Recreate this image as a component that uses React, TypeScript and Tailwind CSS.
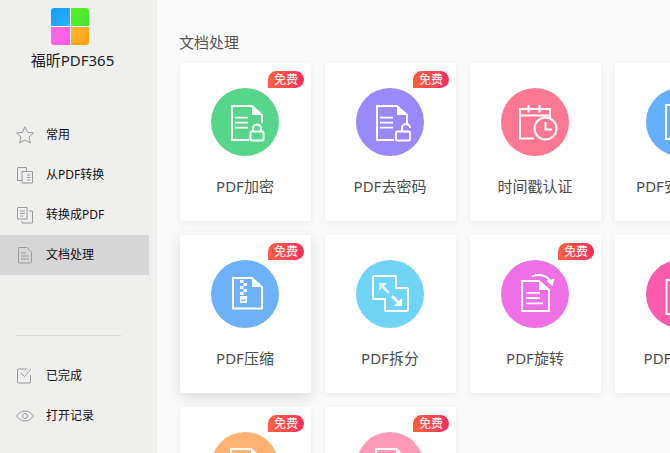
import React from "react";

const FONT = "[font-family:'Noto_Sans','Noto_Sans_CJK_SC',sans-serif]";
const SW = "2";

function Doc({ x = 21, y = 18, w = 30, h = 34, cut = false }: { x?: number; y?: number; w?: number; h?: number; cut?: boolean }) {
  const fx = x + w - 10;
  const fy = y + 9;
  const r = x + w;
  const b = y + h;
  const outline = cut
    ? `M${x + 17} ${b}H${x}V${y}H${fx}L${r} ${fy}V${b - 17}`
    : `M${x} ${y}H${fx}L${r} ${fy}V${b}H${x}Z`;
  return (
    <>
      <path d={outline} fill="none" stroke="#fff" strokeWidth={SW} />
      <path d={`M${fx} ${y}L${r} ${fy}H${fx}Z`} fill="#fff" />
    </>
  );
}

function Icon({ name }: { name: string }) {
  const lines = (x: number, y: number, w: number, step = 5) => (
    <path d={`M${x} ${y}h${w}M${x} ${y + step}h${w}M${x} ${y + step * 2}h${w}`} stroke="#fff" strokeWidth="1.800" fill="none" />
  );
  let body: React.ReactNode = null;
  if (name === "lock") {
    body = (
      <>
        <Doc cut />
        {lines(24, 29.7, 13)}
        <rect x="39.500" y="43.500" width="13" height="9" rx="1.500" fill="none" stroke="#fff" strokeWidth={SW} />
        <path d="M42 43v-2.500a4 4 0 0 1 8 0V43" fill="none" stroke="#fff" strokeWidth={SW} />
      </>
    );
  } else if (name === "unlock") {
    body = (
      <>
        <Doc cut />
        {lines(24, 29.7, 13)}
        <rect x="40" y="43.500" width="14" height="9" rx="1.500" fill="none" stroke="#fff" strokeWidth={SW} />
        <path d="M46 43v-3a4 4 0 0 1 8 0" fill="none" stroke="#fff" strokeWidth={SW} />
      </>
    );
  } else if (name === "clock") {
    body = (
      <>
        <path d="M33 50.500H19V21H49V30" fill="none" stroke="#fff" strokeWidth={SW} />
        <path d="M19 27.500H49M27.500 17V24.500M38.500 17V24.500" fill="none" stroke="#fff" strokeWidth={SW} />
        <circle cx="44.500" cy="40.500" r="11" fill="none" stroke="#fff" strokeWidth={SW} />
        <path d="M44.500 34V41.500H51" fill="none" stroke="#fff" strokeWidth={SW} />
      </>
    );
  } else if (name === "zip") {
    body = (
      <>
        <Doc x={22} y={18} w={29} h={30.500} />
        <path d="M29 20h3.500v3H29zM32.500 23H36v3h-3.500zM29 26h3.500v3H29zM32.500 29H36v3h-3.500zM29 32h3.500v3H29z" fill="#fff" />
        <path d="M29 36h7v7h-7z" fill="#fff" />
        <path d="M30.500 39.500h4v1.500h-4z" fill="#6db2f8" />
      </>
    );
  } else if (name === "split") {
    body = (
      <>
        <path d="M18 16H39a1 1 0 0 1 1 1V28H51a1 1 0 0 1 1 1V50a1 1 0 0 1-1 1H30a1 1 0 0 1-1-1V39H18a1 1 0 0 1-1-1V17a1 1 0 0 1 1-1Z" fill="none" stroke="#fff" strokeWidth={SW} />
        <path d="M25 25L33 33" stroke="#d8f3fd" strokeWidth="2.500" />
        <path d="M23 23h8l-8 8z" fill="#d8f3fd" />
        <path d="M36 36L44 44" stroke="#fff" strokeWidth="2.500" />
        <path d="M46 46h-8l8-8z" fill="#fff" />
      </>
    );
  } else if (name === "rotate") {
    body = (
      <>
        <Doc x={21} y={21} w={27} h={30} />
        <path d="M25 32.800h14M25 38h14M25 43.300h17" stroke="#fff" strokeWidth="1.800" fill="none" />
        <path d="M31 16.500C38 13.500 46 15 49.500 21.500" fill="none" stroke="#fff" strokeWidth={SW} />
        <path d="M45.500 21L53.500 18.500L51.500 26.500Z" fill="#fff" />
      </>
    );
  } else if (name === "wm") {
    body = <Doc x={20.500} y={20} w={30} h={34} />;
  } else {
    body = (
      <>
        <Doc x={20} y={17} w={30} h={34} />
        {lines(24, 30, 18)}
      </>
    );
  }
  return (
    <svg viewBox="0 0 68 68" className="w-[68px] h-[68px]">
      {body}
    </svg>
  );
}

type Tool = { label: string; color: string; icon: string; free?: boolean; hover?: boolean };

const tools: Tool[] = [
  { label: "PDF加密", color: "bg-[#57d68b]", icon: "lock", free: true },
  { label: "PDF去密码", color: "bg-[#9a88fd]", icon: "unlock", free: true },
  { label: "时间戳认证", color: "bg-[#ff7891]", icon: "clock" },
  { label: "PDF安全设置", color: "bg-[#66affe]", icon: "doc" },
  { label: "PDF压缩", color: "bg-[#6db2f8]", icon: "zip", free: true, hover: true },
  { label: "PDF拆分", color: "bg-[#71d3f6]", icon: "split" },
  { label: "PDF旋转", color: "bg-[#ef6fe4]", icon: "rotate", free: true },
  { label: "PDF加水印", color: "bg-[#fb5bac]", icon: "wm" },
  { label: "", color: "bg-[#ffb273]", icon: "doc", free: true },
  { label: "", color: "bg-[#ff9ab9]", icon: "doc", free: true },
];

function Card({ t }: { t: Tool }) {
  return (
    <div
      className={`relative w-[131px] h-[158px] bg-white rounded-[2px] flex flex-col items-center pt-[25px] pr-[2px] ${
        t.hover ? "shadow-[0_4px_14px_rgba(0,0,0,0.13)]" : "shadow-[0_2px_6px_rgba(0,0,0,0.06)]"
      }`}
    >
      {t.free && (
        <span className="absolute top-[8px] right-[7px] w-[36px] h-[17px] rounded-t-[8.500px] rounded-br-[8.500px] rounded-bl-none bg-gradient-to-r from-[#ff6040] to-[#ff2a5f] text-white text-[12px] leading-[17px] text-center">
          免费
        </span>
      )}
      <div className={`w-[68px] h-[68px] rounded-full shrink-0 ${t.color}`}>
        <Icon name={t.icon} />
      </div>
      <div className="mt-[19px] ml-[1px] text-[15px] leading-[22px] text-[#4d4d4d] whitespace-nowrap">{t.label}</div>
    </div>
  );
}

const I = "w-[18px] h-[18px] shrink-0";
const S = { fill: "none", stroke: "#9a9a9a", strokeWidth: 1 } as const;

const StarI = () => (
  <svg viewBox="0 0 18 18" className={I} {...S}>
    <path d="M9 .8l2.500 5.500 6 .7-4.500 4 1.300 5.900L9 14l-5.300 2.900L5 11 .5 7l6-.7z" />
  </svg>
);
const FromI = () => (
  <svg viewBox="0 0 18 18" className={I} {...S}>
    <path d="M6 14.500H1.500V1.500H10.500V5" />
    <path d="M6 5.500H16.500V17H6z" />
    <path d="M11 9h3.500M11 11.500h3.500M11 14h3.500" />
  </svg>
);
const ToI = () => (
  <svg viewBox="0 0 18 18" className={I} {...S}>
    <path d="M1.500 1.500H11V13H1.500z" />
    <path d="M13 5H16.500V17H6V15" />
    <path d="M4 5h5M4 7.500h5M4 10h3.500" />
  </svg>
);
const DocI = () => (
  <svg viewBox="0 0 18 18" className={I} {...S}>
    <path d="M2.500 2.500a1 1 0 0 1 1-1H11l4.500 4.500V16a1 1 0 0 1-1 1H3.500a1 1 0 0 1-1-1z" />
    <path d="M5 7h5M5 10h8M5 13h8" />
  </svg>
);
const CheckI = () => (
  <svg viewBox="0 0 18 18" className={I} {...S}>
    <path d="M11.500 2H2.500a1 1 0 0 0-1 1v12a1 1 0 0 0 1 1h11a1 1 0 0 0 1-1V8" />
    <path d="M5 6l3.500 3.500L15 2" />
  </svg>
);
const EyeI = () => (
  <svg viewBox="0 0 18 18" className={I} {...S}>
    <path d="M.5 9C3 5.500 6 4 9 4s6 1.500 8.500 5C15 12.500 12 14 9 14S3 12.500.5 9z" />
    <circle cx="9" cy="9" r="2.500" />
  </svg>
);

function NavItem({ icon, label, active }: { icon: React.ReactNode; label: string; active?: boolean }) {
  return (
    <div className={`h-[40px] w-[149px] flex items-center pl-[16px] gap-[12px] text-[12px] text-[#111] ${active ? "bg-[#d6d6d6]" : ""}`}>
      {icon}
      <span>{label}</span>
    </div>
  );
}

export default function App() {
  return (
    <div className={`w-[670px] h-[453px] overflow-hidden flex bg-[#fafafa] ${FONT}`}>
      <aside className="w-[157px] h-full shrink-0 bg-[#efefee] flex flex-col">
        <div className="pt-[8px] flex flex-col items-center w-[140px]">
          <div className="w-[38px] h-[37px] grid grid-cols-2 gap-[1px] bg-white rounded-[3px] overflow-hidden">
            <div className="bg-gradient-to-br from-[#0a9dfe] to-[#2eb2fe]" />
            <div className="bg-gradient-to-br from-[#58ee28] to-[#3fe92f]" />
            <div className="bg-gradient-to-br from-[#fb6ae8] to-[#f95ddf]" />
            <div className="bg-gradient-to-br from-[#ffba30] to-[#ff9d06]" />
          </div>
          <div className="mt-[4px] ml-[5px] text-[15px] leading-[22px] text-[#222] whitespace-nowrap">福昕PDF365</div>
        </div>
        <nav className="mt-[44px] flex flex-col">
          <NavItem icon={<StarI />} label="常用" />
          <NavItem icon={<FromI />} label="从PDF转换" />
          <NavItem icon={<ToI />} label="转换成PDF" />
          <NavItem icon={<DocI />} label="文档处理" active />
        </nav>
        <div className="mt-[60px] ml-[16px] w-[105px] h-px bg-[#d9d9d9]" />
        <div className="mt-[20px] flex flex-col">
          <NavItem icon={<CheckI />} label="已完成" />
          <NavItem icon={<EyeI />} label="打开记录" />
        </div>
      </aside>
      <main className="flex-1 min-w-0 pl-[22px] pr-0">
        <h1 className="mt-[31px] text-[15px] leading-[22px] text-[#555] font-normal">文档处理</h1>
        <div className="mt-[10px] grid grid-cols-[repeat(4,131px)] gap-[14px] ml-px">
          {tools.map((t, i) => (
            <Card key={i} t={t} />
          ))}
        </div>
      </main>
    </div>
  );
}
